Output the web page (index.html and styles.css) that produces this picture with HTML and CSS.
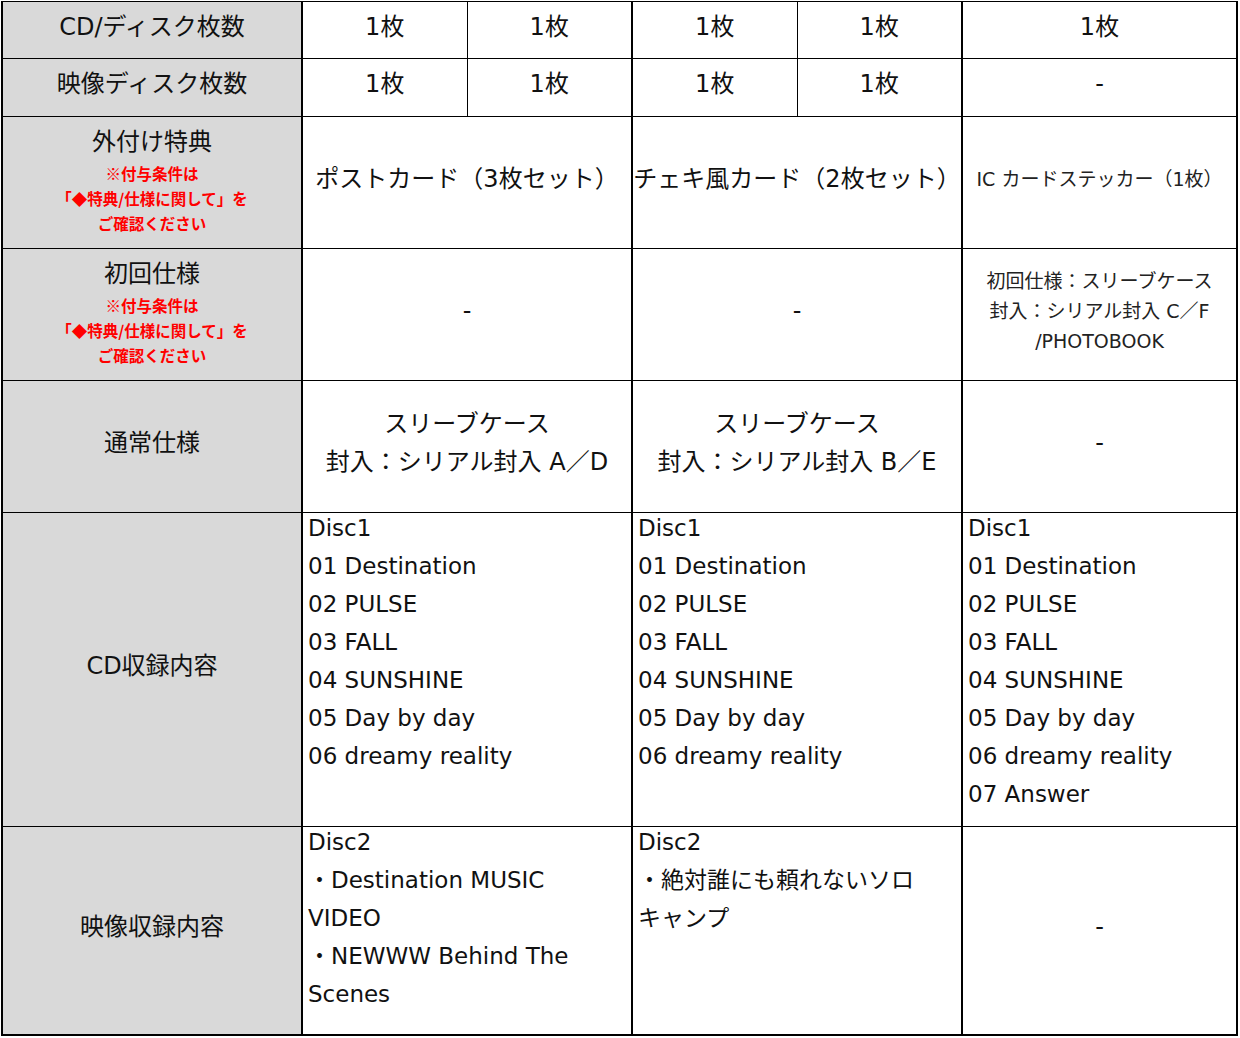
FILE: index.html
```html
<!DOCTYPE html>
<html lang="ja">
<head>
<meta charset="utf-8">
<link rel="stylesheet" href="styles.css">
</head>
<body>
<table class="spec">
  <colgroup>
    <col class="c-head">
    <col class="c-narrow">
    <col class="c-narrow">
    <col class="c-narrow">
    <col class="c-narrow">
    <col class="c-wide">
  </colgroup>
  <tr class="r1">
    <th>CD/ディスク枚数</th>
    <td class="major">1枚</td>
    <td class="minor">1枚</td>
    <td class="major">1枚</td>
    <td class="minor">1枚</td>
    <td class="major">1枚</td>
  </tr>
  <tr class="r2">
    <th>映像ディスク枚数</th>
    <td class="major">1枚</td>
    <td class="minor">1枚</td>
    <td class="major">1枚</td>
    <td class="minor">1枚</td>
    <td class="major">-</td>
  </tr>
  <tr class="r3">
    <th>
      <div class="hd">外付け特典</div>
      <div class="note">※付与条件は<br>「◆特典/仕様に関して」を<br>ご確認ください</div>
    </th>
    <td class="major" colspan="2">ポストカード（3枚セット）</td>
    <td class="major" colspan="2">チェキ風カード（2枚セット）</td>
    <td class="major small">IC カードステッカー（1枚）</td>
  </tr>
  <tr class="r4">
    <th>
      <div class="hd">初回仕様</div>
      <div class="note">※付与条件は<br>「◆特典/仕様に関して」を<br>ご確認ください</div>
    </th>
    <td class="major" colspan="2">-</td>
    <td class="major" colspan="2">-</td>
    <td class="major small">初回仕様：スリーブケース<br>封入：シリアル封入 C／F<br>/PHOTOBOOK</td>
  </tr>
  <tr class="r5">
    <th>通常仕様</th>
    <td class="major two" colspan="2">スリーブケース<br>封入：シリアル封入 A／D</td>
    <td class="major two" colspan="2">スリーブケース<br>封入：シリアル封入 B／E</td>
    <td class="major">-</td>
  </tr>
  <tr class="r6">
    <th>CD収録内容</th>
    <td class="major list" colspan="2"><div class="lines">Disc1<br>01 Destination<br>02 PULSE<br>03 FALL<br>04 SUNSHINE<br>05 Day by day<br>06 dreamy reality</div></td>
    <td class="major list" colspan="2"><div class="lines">Disc1<br>01 Destination<br>02 PULSE<br>03 FALL<br>04 SUNSHINE<br>05 Day by day<br>06 dreamy reality</div></td>
    <td class="major list"><div class="lines">Disc1<br>01 Destination<br>02 PULSE<br>03 FALL<br>04 SUNSHINE<br>05 Day by day<br>06 dreamy reality<br>07 Answer</div></td>
  </tr>
  <tr class="r7">
    <th>映像収録内容</th>
    <td class="major list" colspan="2"><div class="lines">Disc2<br>・Destination MUSIC<br>VIDEO<br>・NEWWW Behind The<br>Scenes</div></td>
    <td class="major list" colspan="2"><div class="lines">Disc2<br>・絶対誰にも頼れないソロ<br>キャンプ</div></td>
    <td class="major">-</td>
  </tr>
</table>
</body>
</html>
```

FILE: styles.css
```css
html, body {
  margin: 0;
  padding: 0;
  background: #ffffff;
}

body {
  padding: 1px 0 0 1px;
  font-family: "DejaVu Sans", "Noto Sans CJK JP", sans-serif;
  color: #111111;
}

.spec {
  border-collapse: collapse;
  table-layout: fixed;
  width: 1237px;
  border-left: 2px solid #000;
  border-right: 2px solid #000;
  border-bottom: 2px solid #000;
  border-top: 1px solid #000;
}

.c-head { width: 300px; }
.c-narrow { width: 165px; }
.c-wide { width: 275px; }

.spec th,
.spec td {
  border-top: 1px solid #000;
  border-bottom: 1px solid #000;
  padding: 0 0 7px 0;
  text-align: center;
  vertical-align: middle;
  font-size: 24px;
  line-height: 34px;
  font-weight: normal;
  white-space: nowrap;
}

.spec th {
  background: #d9d9d9;
  border-right: 2px solid #000;
  color: #111;
}

.spec td.major { border-left: 2px solid #000; }
.spec td.minor { border-left: 1px solid #000; }

.r1 > * { height: 49px; }
.r2 > * { height: 50px; }
.r3 > * { height: 124px; }
.r4 > * { height: 124px; }
.r5 > * { height: 124px; }
.r6 > * { height: 306px; }
.r7 > * { height: 200px; }

.hd {
  line-height: 38px;
}

.note {
  color: #ff0000;
  font-weight: bold;
  font-size: 15.5px;
  line-height: 25px;
  font-family: "Noto Sans CJK JP", sans-serif;
}

.spec td.small {
  font-size: 19px;
  line-height: 30px;
  color: #222;
}

.spec td.two {
  line-height: 38px;
}

.spec td.list {
  text-align: left;
  vertical-align: top;
  font-size: 23px;
  line-height: 38px;
  padding: 0 0 0 5px;
}

.lines {
  margin-top: -4px;
}
```
